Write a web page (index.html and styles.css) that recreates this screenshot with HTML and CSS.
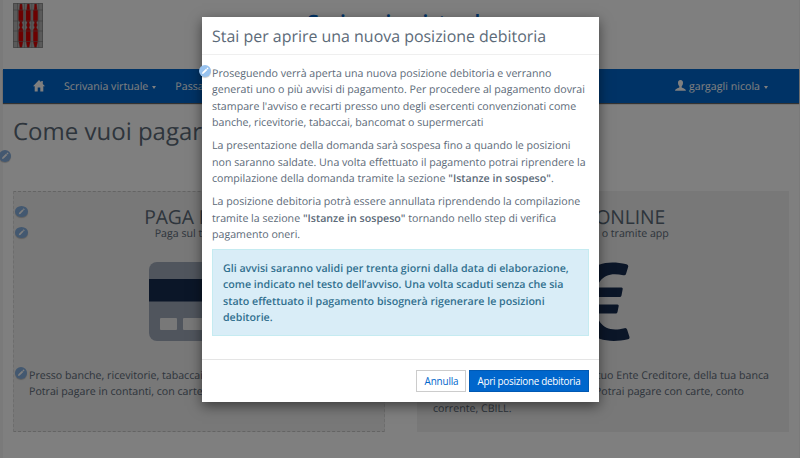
FILE: index.html
```html
<!DOCTYPE html>
<html lang="it">
<head>
<meta charset="utf-8">
<title>Scrivania virtuale</title>
<link rel="stylesheet" href="styles.css">
</head>
<body>
<svg class="defs" width="0" height="0">
  <symbol id="pencil" viewBox="0 0 12 12"><path d="M3 9l.4-1.7 3.6-3.6 1.3 1.3-3.6 3.6zM7.4 3.3l.6-.6c.6-.4 1.8.7 1.3 1.3l-.6.6z"/></symbol>
</svg>
<div class="page">
  <header class="top">
    <svg class="logo" viewBox="0 0 30 45">
      <rect width="30" height="45" fill="#b4b4b4"/>
      <g fill="#d80000" stroke="#a04040" stroke-width=".4">
        <path id="candle" d="M7 1h2l.6 6h.6v10.500l-1.400 2 .9 2.500-.9 2.500 1.400 2.500v11l-1.400 6.500H7l-1.400-6.500V27L7 24.500 6.100 22 7 19.500l-1.400-2V7h.8z"/>
        <use href="#candle" x="7.300"/>
        <use href="#candle" x="14.600"/>
      </g>
      <path d="M.5.5h29v44H.5zM0 7h30M0 18h30M0 28h30M0 38.500h30M4.500 0v45M11.500 0v45M18.800 0v45M25.800 0v45" fill="none" stroke="#777" stroke-opacity=".7" stroke-width=".8"/>
    </svg>
    <div class="site-title">Scrivania virtuale</div>
  </header>
  <nav class="navbar">
    <svg class="home" viewBox="0 0 12 12"><path d="M6 0L0 6.200h1.700V11.500h3V7.500h2.600v4h3V6.200H12L9.800 3.900V1H8.200v1.300z"/></svg>
    <span class="item">Scrivania virtuale<i class="caret"></i></span>
    <span class="item">Passa</span>
    <span class="item user"><svg class="person" viewBox="0 0 11 11"><path d="M5.500 0C3.600 0 2.900 1.400 3 3c.1 1.500.6 2.500 1.300 3.200v1.200C3 8.200.2 8.700 0 10.800h11C10.800 8.700 8 8.200 6.700 7.400V6.200C7.400 5.500 7.900 4.500 8 3 8.100 1.400 7.400 0 5.500 0z"/></svg>gargagli nicola<i class="caret"></i></span>
  </nav>
  <main>
    <h1>Come vuoi pagare?</h1>
    <svg class="edit edit-page"><use href="#pencil"/></svg>
    <div class="cards">
      <section class="card dashed">
        <svg class="edit edit-a"><use href="#pencil"/></svg>
        <svg class="edit edit-b"><use href="#pencil"/></svg>
        <svg class="edit edit-c"><use href="#pencil"/></svg>
        <h2>PAGA DOPO</h2>
        <p class="sub">Paga sul territorio</p>
        <svg class="pic" viewBox="0 0 100 79"><rect width="100" height="79" rx="8" fill="#a0aabb"/><rect y="17" width="100" height="22.500" fill="#162c50"/><rect x="11" y="56" width="17" height="12" rx="1" fill="#f0f0f0"/><rect x="34" y="56" width="28" height="12" rx="1" fill="#f0f0f0"/></svg>
        <p class="desc">Presso banche, ricevitorie, tabaccai<br>Potrai pagare in contanti, con carte</p>
      </section>
      <section class="card">
        <h2>PAGA ONLINE</h2>
        <p class="sub">Paga sul sito o tramite app</p>
        <svg class="pic" viewBox="2 0 100 79"><g fill="#162c50"><path d="M75.500 2.200Q77.600 2.800 77.200 4.800L75 12q-.6 1.800-2.600 1.200C53 9 45 18 43 39.500 45 62 54 71 73.500 66.200q2-.5 2.600 1.400L78.500 75q.3 1.800-1.500 2.300C50 83 28 74 25 39.500 28 5 50-4 75.500 2.200z"/><path d="M18 25.500h52.500q1.500 0 1.200 1.500L70.500 33.500q-.4 1.500-1.800 1.500H18zM18 42.500h48.500q1.500 0 1.200 1.500L66.500 50q-.3 1.500-1.800 1.500H18z"/></g></svg>
        <div class="desc online">
          <p>tuo Ente Creditore, della tua banca</p>
          <p>Potrai pagare con carte, conto</p>
          <p>corrente, CBILL.</p>
        </div>
      </section>
    </div>
  </main>
</div>
<div class="backdrop">
  <div class="modal" role="dialog">
    <svg class="edit edit-modal"><use href="#pencil"/></svg>
    <div class="modal-head">Stai per aprire una nuova posizione debitoria</div>
    <div class="modal-body">
      <p>Proseguendo verrà aperta una nuova posizione debitoria e verranno<br>generati uno o più avvisi di pagamento. Per procedere al pagamento dovrai<br>stampare l'avviso e recarti presso uno degli esercenti convenzionati come<br>banche, ricevitorie, tabaccai, bancomat o supermercati</p>
      <p>La presentazione della domanda sarà sospesa fino a quando le posizioni<br>non saranno saldate. Una volta effettuato il pagamento potrai riprendere la<br>compilazione della domanda tramite la sezione <b>"Istanze in sospeso"</b>.</p>
      <p>La posizione debitoria potrà essere annullata riprendendo la compilazione<br>tramite la sezione <b>"Istanze in sospeso"</b> tornando nello step di verifica<br>pagamento oneri.</p>
      <div class="alert">Gli avvisi saranno validi per trenta giorni dalla data di elaborazione,<br>come indicato nel testo dell’avviso. Una volta scaduti senza che sia<br>stato effettuato il pagamento bisognerà rigenerare le posizioni<br>debitorie.</div>
    </div>
    <div class="modal-foot">
      <button class="btn">Annulla</button>
      <button class="btn primary">Apri posizione debitoria</button>
    </div>
  </div>
</div>
</body>
</html>
```
FILE: styles.css
```css
* { box-sizing: border-box; }
body {
  margin: 0;
  height: 458px;
  overflow: hidden;
  background: #f5f5f5;
  color: #5c6a78;
  font: 10.65px/16.45px "Open Sans", sans-serif;
  text-rendering: geometricPrecision;
}
h1, h2, p { margin: 0; font-weight: 400; }
.defs { position: absolute; }
.page { margin: 0 1px 0 3px; height: 458px; background: #fff; }
.top { height: 69px; position: relative; padding: 3px 0 0 10px; }
.logo { display: block; width: 30px; height: 45px; }
.site-title {
  position: absolute; top: 8px; left: -1px; width: 796px;
  text-align: center; color: #0066cc;
  font-size: 22.4px; line-height: 30px; font-weight: 600;
}
.navbar {
  display: flex; align-items: center; height: 34px;
  padding: 1px 30px 0; background: #0066cc; color: #fff;
  box-shadow: 0 1px 1px rgba(0,0,0,.6);
}
.navbar svg { fill: #fff; }
.home { width: 12px; height: 12px; margin: -2px 19px 0 0; }
.item { display: flex; align-items: center; margin-right: 19px; padding-top: 1px; }
.user { margin: 0 1px 0 auto; }
.person { width: 11px; height: 11px; margin: -2px 3px 0 0; }
.caret { border: 2.5px solid transparent; border-top: 3px solid #fff; border-bottom: 0; margin-left: 4px; margin-top: 1px; }
main { position: relative; padding: 0 10px; }
h1 { padding-top: 12px; height: 88px; font-size: 24px; line-height: 34px; }
.edit {
  position: absolute; width: 12px; height: 12px; padding: 0;
  border-radius: 50%; background: #86b0e0; fill: #fff;
  box-shadow: 0 1px 1px rgba(0,0,0,.2);
}
.edit-page { left: -4px; top: 47px; }
.edit-a { left: 1px; top: 14px; width: 13px; height: 11px; }
.edit-b { left: 1px; top: 35px; width: 13px; height: 11px; }
.edit-c { left: 1px; top: 175px; }
.edit-modal { left: -3px; top: 48px; background: #98c2ee; }
.cards { display: grid; grid-template-columns: 372px 372px; gap: 32px; }
.card { position: relative; height: 241px; padding: 14px 15px; background: #f0f0f0; border: 1px solid transparent; }
.dashed { border: 1px dashed #c8c8c8; border-left-color: #dadada; border-right-color: #dadada; background-clip: border-box; }
h2 { text-align: center; font-size: 19.3px; line-height: 22px; letter-spacing: -.1px; }
.sub { text-align: center; line-height: 12px; }
.pic { display: block; width: 100px; height: 79px; margin: 22px auto 27px; }
.desc { white-space: nowrap; }
.online p:nth-child(1) { padding-right: 4px; text-align: right; }
.online p:nth-child(2) { padding-right: 29px; text-align: right; }
.backdrop { position: absolute; inset: 0; background: rgba(0,0,0,.5); }
.modal {
  position: relative; width: 397px; height: 385px; margin: 17px 0 0 202px;
  background: #fff; box-shadow: 0 4px 12px rgba(0,0,0,.5);
  display: flex; flex-direction: column;
}
.modal-head { height: 38px; padding: 0 10px; font-size: 15.95px; line-height: 38px; border-bottom: 1px solid #efefef; }
.modal-body { flex: 1; padding: 11px 10px 0; white-space: nowrap; }
.modal-body p { margin-bottom: 6.500px; }
.modal-body p:nth-child(3) { margin-bottom: 5.500px; }
b { font-weight: 600; }
.alert { height: 87px; padding: 11px 10px 0; background: #d9edf7; border: 1px solid #c5ebf1; color: #31708f; font-weight: 600; }
.modal-foot { display: flex; justify-content: flex-end; gap: 3px; height: 43px; padding: 10px 10px 0; border-top: 1px solid #e5e5e5; }
.btn { width: 50px; height: 22px; padding: 0; border: 1px solid #ccc; background: #fff; color: #0066cc; font: 9.9px/20px "Open Sans", sans-serif; letter-spacing: -.27px; white-space: nowrap; }
.btn:first-child { letter-spacing: -.15px; padding-left: 1px; }
.primary { width: 120px; background: #0066cc; border-color: #0059b3; color: #fff; }
```
